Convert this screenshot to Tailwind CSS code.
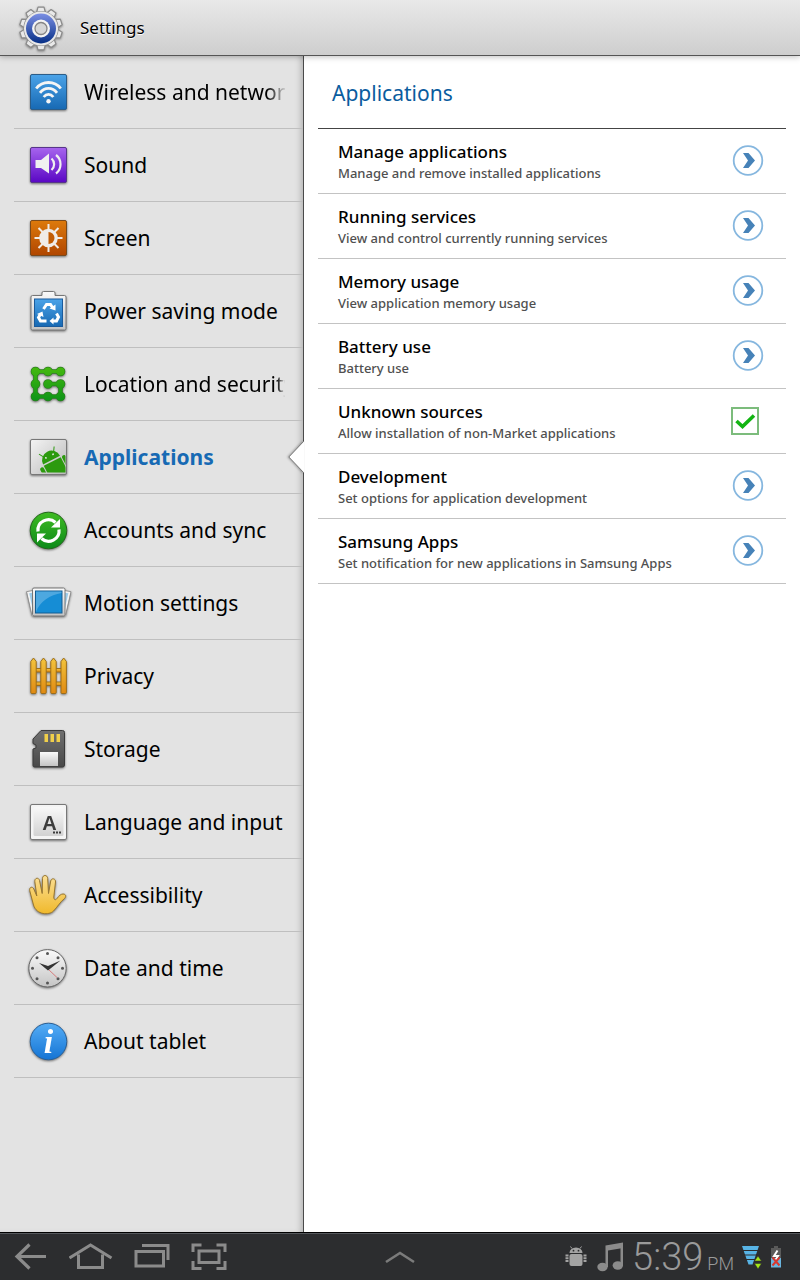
<!DOCTYPE html>
<html lang="en">
<head>
    <meta charset="UTF-8">
    <meta name="viewport" content="width=device-width, initial-scale=1.0">
    <title>Settings</title>
    <script src="https://cdn.jsdelivr.net/npm/@tailwindcss/browser@4"></script>
</head>
<body class="flex min-h-screen flex-col bg-white font-['Noto_Sans','Open_Sans',sans-serif] text-black">
    <!-- shared gradients and symbols -->
    <svg class="absolute size-0" aria-hidden="true">
        <defs>
            <linearGradient id="g-blue" x1="0" y1="0" x2="0" y2="1"><stop offset="0" stop-color="#4ba3e8"/><stop offset="1" stop-color="#1769b3"/></linearGradient>
            <linearGradient id="g-purple" x1="0" y1="0" x2="0" y2="1"><stop offset="0" stop-color="#a765ee"/><stop offset="1" stop-color="#5a07c4"/></linearGradient>
            <linearGradient id="g-orange" x1="0" y1="0" x2="0" y2="1"><stop offset="0" stop-color="#dd7a0c"/><stop offset="1" stop-color="#b04600"/></linearGradient>
            <linearGradient id="g-green" x1="0" y1="0" x2="0" y2="1"><stop offset="0" stop-color="#3fbb22"/><stop offset="1" stop-color="#0c8a1a"/></linearGradient>
            <linearGradient id="g-dots" gradientUnits="userSpaceOnUse" x1="0" y1="5" x2="0" y2="39"><stop offset="0" stop-color="#45b90f"/><stop offset="1" stop-color="#0d9418"/></linearGradient>
            <linearGradient id="g-silver" x1="0" y1="0" x2="0" y2="1"><stop offset="0" stop-color="#fafafa"/><stop offset="1" stop-color="#c4c4c4"/></linearGradient>
            <linearGradient id="g-tile" x1="0" y1="0" x2="1" y2="1"><stop offset="0" stop-color="#f4f4f4"/><stop offset="1" stop-color="#b9b9b9"/></linearGradient>
            <linearGradient id="g-fence" x1="0" y1="0" x2="0" y2="1"><stop offset="0" stop-color="#f3c53e"/><stop offset="1" stop-color="#e08a12"/></linearGradient>
            <linearGradient id="g-card" x1="0" y1="0" x2="0" y2="1"><stop offset="0" stop-color="#707070"/><stop offset="1" stop-color="#484848"/></linearGradient>
            <linearGradient id="g-hand" x1="0" y1="0" x2="0" y2="1"><stop offset="0" stop-color="#fbdf95"/><stop offset="1" stop-color="#f0b92c"/></linearGradient>
            <linearGradient id="g-info" x1="0" y1="0" x2="0" y2="1"><stop offset="0" stop-color="#55adf6"/><stop offset="1" stop-color="#1474d4"/></linearGradient>
            <linearGradient id="g-ring" x1="0" y1="0" x2="0" y2="1"><stop offset="0" stop-color="#7b8fe4"/><stop offset="1" stop-color="#062f86"/></linearGradient>
            <g id="go">
                <circle cx="16" cy="15.500" r="14.300" fill="#fff" stroke="#86b7df" stroke-width="1.800"/>
                <path d="M11 8h5.500l6.500 7.500-6.500 7.500H11l5-7.500z" fill="#4682b8"/>
            </g>
        </defs>
    </svg>

    <header class="relative z-10 flex h-14 shrink-0 items-center gap-4 border-b border-[#555] bg-linear-to-b from-[#e9e9e9] to-[#cecece] pl-[18px] shadow-[0_1px_6px_rgba(0,0,0,0.25)]">
        <svg class="size-[46px] drop-shadow-[0_1px_1px_rgba(0,0,0,0.4)]" viewBox="0 0 46 46" aria-hidden="true">
            <g fill="#e9e9e9" stroke="#8a8a8a" stroke-width="1.200" stroke-linejoin="round">
                <path id="tooth" d="M18.500 8 20 2.200h6L27.500 8z"/>
                <use href="#tooth" transform="rotate(36 23 23.500)"/>
                <use href="#tooth" transform="rotate(72 23 23.500)"/>
                <use href="#tooth" transform="rotate(108 23 23.500)"/>
                <use href="#tooth" transform="rotate(144 23 23.500)"/>
                <use href="#tooth" transform="rotate(180 23 23.500)"/>
                <use href="#tooth" transform="rotate(216 23 23.500)"/>
                <use href="#tooth" transform="rotate(252 23 23.500)"/>
                <use href="#tooth" transform="rotate(288 23 23.500)"/>
                <use href="#tooth" transform="rotate(324 23 23.500)"/>
                <circle cx="23" cy="23.500" r="17"/>
            </g>
            <circle cx="23" cy="23.500" r="17" fill="#e9e9e9"/>
            <circle cx="23" cy="23.500" r="15" fill="url(#g-ring)"/>
            <circle cx="23" cy="23.500" r="9" fill="#f4f4f4"/>
            <circle cx="23" cy="23.500" r="6" fill="#d6d6d6" stroke="#858585" stroke-width="1.300"/>
        </svg>
        <h1 class="text-[17px] leading-6 text-shadow-[0_1px_0_#fff]">Settings</h1>
    </header>

    <div class="flex flex-1">
        <nav class="w-[38%] shrink-0 border-r border-[#4a4a4a] bg-[#e3e3e3] pl-3.5 shadow-[inset_-5px_0_6px_-3px_rgba(0,0,0,0.22)]" aria-label="Settings sections">
            <ul class="text-[21px] leading-7 whitespace-nowrap">
                <li class="border-b border-[#bfbfbf]">
                    <a href="#wireless" class="flex h-[72px] items-center gap-3.5 pl-3">
                        <svg class="size-11 shrink-0 drop-shadow-[0_1px_1px_rgba(0,0,0,0.5)]" viewBox="0 0 44 44">
                            <rect x="4.500" y="4.500" width="36" height="35" rx="1.500" fill="url(#g-blue)" stroke="#2c5d88"/>
                            <g fill="none" stroke="#f5f5f5" stroke-width="2.800">
                                <path d="M10.200 18.500C16.500 10.500 28.500 10.500 34.800 18.500"/>
                                <path d="M14 22.800C18.500 17 26.500 17 31 22.800"/>
                                <path d="M17.700 27C20.500 23.500 24.500 23.500 27.300 27"/>
                            </g>
                            <circle cx="22.500" cy="31.200" r="2.200" fill="#f5f5f5"/>
                        </svg>
                        <span class="mr-4 overflow-hidden mask-r-from-90% mask-r-to-100%">Wireless and networks</span>
                    </a>
                </li>
                <li class="border-b border-[#bfbfbf]">
                    <a href="#sound" class="flex h-[72px] items-center gap-3.5 pl-3">
                        <svg class="size-11 shrink-0 drop-shadow-[0_1px_1px_rgba(0,0,0,0.5)]" viewBox="0 0 44 44">
                            <rect x="4.500" y="4.500" width="36" height="35" rx="1.500" fill="url(#g-purple)" stroke="#57358a"/>
                            <path d="M9.500 17h5.500l8-6.500v20L15 25H9.500z" fill="#f0f0f0"/>
                            <g fill="none" stroke="#f0f0f0" stroke-width="2.200">
                                <path d="M25.500 15.500C29 18.500 29 24 25.500 27"/>
                                <path d="M30 12C36 16.500 36 26 30 30.500"/>
                            </g>
                        </svg>
                        <span>Sound</span>
                    </a>
                </li>
                <li class="border-b border-[#bfbfbf]">
                    <a href="#screen" class="flex h-[72px] items-center gap-3.5 pl-3">
                        <svg class="size-11 shrink-0 drop-shadow-[0_1px_1px_rgba(0,0,0,0.5)]" viewBox="0 0 44 44">
                            <rect x="4.500" y="4.500" width="36" height="35" rx="1.500" fill="url(#g-orange)" stroke="#7a4a1c"/>
                            <path d="M22.500 8v28M8.500 22h28M12.500 12l20 20M32.500 12l-20 20" stroke="#f0ece8" stroke-width="2"/>
                            <circle cx="22.500" cy="22" r="9.300" fill="#f0ece8"/>
                            <path d="M22.500 16a6 6 0 0 1 0 12z" fill="#c25c04"/>
                        </svg>
                        <span>Screen</span>
                    </a>
                </li>
                <li class="border-b border-[#bfbfbf]">
                    <a href="#power" class="flex h-[72px] items-center gap-3.5 pl-3">
                        <svg class="size-11 shrink-0 drop-shadow-[0_1px_1px_rgba(0,0,0,0.5)]" viewBox="0 0 44 44">
                            <path d="M6.500 6.500H16V4q0-1.500 1.500-1.500h10Q29 2.500 29 4v2.500h9.500Q40 6.500 40 8v31.500q0 1.500-1.500 1.500h-32Q5 41 5 39.500V8q0-1.500 1.500-1.500z" fill="url(#g-silver)" stroke="#777"/>
                            <rect x="8.500" y="10" width="28" height="27.500" fill="url(#g-blue)" stroke="#1b5b9c"/>
                            <g fill="none" stroke="#fff" stroke-width="3">
                                <path d="M17.500 20 20.500 15.500h4l2 3"/>
                                <path d="M30.500 24.500l2 3.500-2 4h-3.500"/>
                                <path d="M20.500 32h-6l-2-3.500 2-3.500"/>
                            </g>
                            <g fill="#fff">
                                <path d="M29.500 15.500v6l-6-2z"/>
                                <path d="M27.500 28.500v7L23.500 32z"/>
                                <path d="M11 25l5.500-2.500 1 5.500z"/>
                            </g>
                        </svg>
                        <span>Power saving mode</span>
                    </a>
                </li>
                <li class="border-b border-[#bfbfbf]">
                    <a href="#location" class="flex h-[72px] items-center gap-3.5 pl-3">
                        <svg class="size-11 shrink-0 drop-shadow-[0_1px_1px_rgba(0,0,0,0.5)]" viewBox="0 0 44 44">
                            <g fill="none" stroke-linecap="round" stroke-linejoin="round">
                                <g stroke="#2b7d20">
                                    <path d="M34.500 9.500H9.500V34.500H34.500V22H22" stroke-width="4.600"/>
                                    <path d="M9.500 9.500h.01M22 9.500h.01M34.500 9.500h.01M9.500 22h.01M22 22h.01M34.500 22h.01M9.500 34.500h.01M22 34.500h.01M34.500 34.500h.01" stroke-width="9.600"/>
                                </g>
                                <g stroke="url(#g-dots)">
                                    <path d="M34.500 9.500H9.500V34.500H34.500V22H22" stroke-width="3.200"/>
                                    <path d="M9.500 9.500h.01M22 9.500h.01M34.500 9.500h.01M9.500 22h.01M22 22h.01M34.500 22h.01M9.500 34.500h.01M22 34.500h.01M34.500 34.500h.01" stroke-width="8.200"/>
                                </g>
                            </g>
                        </svg>
                        <span class="mr-4 overflow-hidden mask-r-from-95% mask-r-to-99%">Location and security</span>
                    </a>
                </li>
                <li class="relative border-b border-[#bfbfbf]">
                    <a href="#applications" aria-current="page" class="flex h-[72px] items-center gap-3.5 pl-3 font-bold text-[#176ab4]">
                        <svg class="size-11 shrink-0 drop-shadow-[0_1px_1px_rgba(0,0,0,0.5)]" viewBox="0 0 44 44">
                            <defs><clipPath id="tile-clip"><rect x="5" y="5" width="34.500" height="32.500"/></clipPath></defs>
                            <rect x="4.500" y="4.500" width="36" height="35" rx="1.500" fill="url(#g-tile)" stroke="#777"/>
                            <g clip-path="url(#tile-clip)">
                                <g transform="rotate(-27 26 26)" fill="#2c9a0e">
                                    <path d="M16.500 25a9.500 9.500 0 0 1 19 0z"/>
                                    <path d="M20 18l-2.500-4M32 18l2.500-4" stroke="#2c9a0e"/>
                                    <circle cx="22" cy="20.500" r=".9" fill="#eee"/>
                                    <circle cx="30" cy="20.500" r=".9" fill="#eee"/>
                                    <path d="M16.500 26.500h19v18h-19z"/>
                                    <rect x="11.500" y="27" width="4" height="13" rx="2"/>
                                    <rect x="36.500" y="26" width="4" height="13" rx="2"/>
                                </g>
                            </g>
                        </svg>
                        <span>Applications</span>
                    </a>
                    <svg class="absolute top-5 -right-px h-8 w-4 drop-shadow-[-1px_0_1px_rgba(0,0,0,0.3)]" viewBox="0 0 16 32">
                        <path d="M16 0 .800 16 16 32" fill="#fff" stroke="#777"/>
                    </svg>
                </li>
                <li class="border-b border-[#bfbfbf]">
                    <a href="#accounts" class="flex h-[72px] items-center gap-3.5 pl-3">
                        <svg class="size-11 shrink-0 drop-shadow-[0_1px_1px_rgba(0,0,0,0.5)]" viewBox="0 0 44 44">
                            <circle cx="22.500" cy="22.500" r="18.300" fill="url(#g-green)" stroke="#24661c"/>
                            <g fill="none" stroke="#fff" stroke-width="3.200">
                                <path d="M12 23.500a10.500 10.500 0 0 1 17.500-9"/>
                                <path d="M33 21.500a10.500 10.500 0 0 1-17.500 9"/>
                            </g>
                            <path d="M34 11v8.500h-9z" fill="#fff"/>
                            <path d="M11 34.500V25.500h9z" fill="#fff"/>
                        </svg>
                        <span>Accounts and sync</span>
                    </a>
                </li>
                <li class="border-b border-[#bfbfbf]">
                    <a href="#motion" class="flex h-[72px] items-center gap-3.5 pl-3">
                        <svg class="size-11 shrink-0 overflow-visible drop-shadow-[0_1px_1px_rgba(0,0,0,0.5)]" viewBox="0 0 44 44">
                            <g fill="#9ccbe9" stroke="#f3f3f3" stroke-width="2">
                                <path d="M2 11.500 12 9.500V33l-5 .800z"/>
                                <path d="M43.500 11.500 33 9.500V33l5.500.800z"/>
                            </g>
                            <path d="M.500 10.700 7 9.500M45 10.700l-6.500-1.200M.500 10.700 6 34.500M45 10.700l-5.500 23.800" stroke="#888" stroke-width=".8"/>
                            <rect x="6.500" y="7" width="32.500" height="28" rx="1.500" fill="url(#g-silver)" stroke="#777"/>
                            <rect x="9.500" y="10" width="26.500" height="22" fill="#168dd5" stroke="#125c92"/>
                            <path d="M10 10.500h25.500v1.500C24 14 14 20 10 31z" fill="#7cc0ea" opacity=".55"/>
                        </svg>
                        <span>Motion settings</span>
                    </a>
                </li>
                <li class="border-b border-[#bfbfbf]">
                    <a href="#privacy" class="flex h-[72px] items-center gap-3.5 pl-3">
                        <svg class="size-11 shrink-0 drop-shadow-[0_1px_1px_rgba(0,0,0,0.5)]" viewBox="0 0 44 44">
                            <g fill="url(#g-fence)" stroke="#9a6a14" stroke-width=".9">
                                <rect x="7" y="14.500" width="31" height="3.500"/>
                                <rect x="7" y="28" width="31" height="3.500"/>
                                <path d="M4.800 7.500l2.700-3.500 2.700 3.500V38.500q0 1-1 1H5.800q-1 0-1-1z"/>
                                <path d="M14.800 7.500l2.700-3.500 2.700 3.500V38.500q0 1-1 1h-3.400q-1 0-1-1z"/>
                                <path d="M24.800 7.500l2.700-3.500 2.700 3.500V38.500q0 1-1 1h-3.400q-1 0-1-1z"/>
                                <path d="M35 7.500l2.700-3.500 2.700 3.500V38.500q0 1-1 1H36q-1 0-1-1z"/>
                            </g>
                        </svg>
                        <span>Privacy</span>
                    </a>
                </li>
                <li class="border-b border-[#bfbfbf]">
                    <a href="#storage" class="flex h-[72px] items-center gap-3.5 pl-3">
                        <svg class="size-11 shrink-0 drop-shadow-[0_1px_1px_rgba(0,0,0,0.5)]" viewBox="0 0 44 44">
                            <path d="M15 3.500h21.500q2 0 2 2V38q0 2-2 2h-28q-1.500 0-1.500-1.500V22l3-1v-3l-3-1.500V12z" fill="url(#g-card)" stroke="#3a3a3a"/>
                            <g fill="#f0cf4a"><rect x="18.500" y="7" width="3.500" height="8"/><rect x="24.500" y="7" width="3.500" height="8"/><rect x="30.500" y="7" width="3.500" height="8"/></g>
                            <rect x="14" y="25" width="18" height="14" fill="url(#g-silver)"/>
                        </svg>
                        <span>Storage</span>
                    </a>
                </li>
                <li class="border-b border-[#bfbfbf]">
                    <a href="#language" class="flex h-[72px] items-center gap-3.5 pl-3">
                        <svg class="size-11 shrink-0 drop-shadow-[0_1px_1px_rgba(0,0,0,0.5)]" viewBox="0 0 44 44" aria-hidden="true">
                            <rect x="4.500" y="4.500" width="36" height="35" rx="1.500" fill="#f4f4f4" stroke="#777"/>
                            <rect x="7.500" y="7" width="30" height="29" rx="1.500" fill="url(#g-silver)" opacity=".7"/>
                            <text x="23.500" y="29.500" text-anchor="middle" class="font-['Liberation_Sans',sans-serif] text-[20px] font-bold" fill="#3c3c3c">A</text>
                            <path d="M27 32.500h2M30 32.500h2M33 32.500h2" stroke="#3c3c3c" stroke-width="2"/>
                        </svg>
                        <span>Language and input</span>
                    </a>
                </li>
                <li class="border-b border-[#bfbfbf]">
                    <a href="#accessibility" class="flex h-[72px] items-center gap-3.5 pl-3">
                        <svg class="size-11 shrink-0 drop-shadow-[0_1px_1px_rgba(0,0,0,0.5)]" viewBox="0 0 44 44">
                            <path d="M7.500 32 3.700 17.500C3 14 6.700 13 7.800 16l3 7L8.800 8.500C8.500 4.800 12.700 4 13.500 7.500L16.200 20.500 16.500 5.500c0-4 5-4 5.200 0L22.500 20.500 24.700 8c.8-3.500 5.200-2.500 4.800 1L27.800 24c0 3 1.700 3.500 3.200 1.500 2-2.800 4-4.500 6-4.500 3 0 3.500 2.500 1.500 4.500C34 29 31.500 34 27.500 38c-4.500 4.500-17 4-20-6z" fill="url(#g-hand)" stroke="#98762f"/>
                        </svg>
                        <span>Accessibility</span>
                    </a>
                </li>
                <li class="border-b border-[#bfbfbf]">
                    <a href="#date" class="flex h-[72px] items-center gap-3.5 pl-3">
                        <svg class="size-11 shrink-0 drop-shadow-[0_1px_1px_rgba(0,0,0,0.5)]" viewBox="0 0 44 44">
                            <circle cx="21.500" cy="22.300" r="18.700" fill="url(#g-silver)" stroke="#666"/>
                            <g fill="#555">
                                <circle cx="21.500" cy="7.500" r="1.500"/><circle cx="32" cy="11.800" r="1.500"/><circle cx="36.500" cy="22.300" r="1.500"/><circle cx="32" cy="32.800" r="1.500"/>
                                <circle cx="21.500" cy="37" r="1.500"/><circle cx="11" cy="32.800" r="1.500"/><circle cx="6.500" cy="22.300" r="1.500"/><circle cx="11" cy="11.800" r="1.500"/>
                            </g>
                            <path d="M21.500 22.500 31 31.500" stroke="#d77b7b"/>
                            <path d="M13 17l9 3 12.500-5.500L22 24.500z" fill="#333"/>
                        </svg>
                        <span>Date and time</span>
                    </a>
                </li>
                <li class="border-b border-[#bfbfbf]">
                    <a href="#about" class="flex h-[72px] items-center gap-3.5 pl-3">
                        <svg class="size-11 shrink-0 drop-shadow-[0_1px_1px_rgba(0,0,0,0.5)]" viewBox="0 0 44 44" aria-hidden="true">
                            <circle cx="22.500" cy="22.500" r="18.300" fill="url(#g-info)" stroke="#2a5f95"/>
                            <text x="22.500" y="33.500" text-anchor="middle" class="font-['Liberation_Serif',serif] text-[34px] font-bold italic" fill="#fff">i</text>
                        </svg>
                        <span>About tablet</span>
                    </a>
                </li>
            </ul>
        </nav>

        <main class="min-w-0 flex-1 px-3.5">
            <h2 class="flex h-[73px] items-center border-b border-[#444] px-3.5 pt-0.5 text-[21px] leading-7 text-[#0a5c9e]">Applications</h2>
            <ul>
                <li class="border-b border-[#c3c3c3]">
                    <a href="#manage" class="flex h-16 items-center justify-between pr-[22px] pl-5">
                        <span class="flex flex-col pt-0.5 font-medium"><span class="text-[17px] leading-[22px]">Manage applications</span><span class="text-[13px] leading-5 text-[#505050]">Manage and remove installed applications</span></span>
                        <svg class="size-8 shrink-0" viewBox="0 0 32 32"><use href="#go"/></svg>
                    </a>
                </li>
                <li class="border-b border-[#c3c3c3]">
                    <a href="#running" class="flex h-16 items-center justify-between pr-[22px] pl-5">
                        <span class="flex flex-col pt-0.5 font-medium"><span class="text-[17px] leading-[22px]">Running services</span><span class="text-[13px] leading-5 text-[#505050]">View and control currently running services</span></span>
                        <svg class="size-8 shrink-0" viewBox="0 0 32 32"><use href="#go"/></svg>
                    </a>
                </li>
                <li class="border-b border-[#c3c3c3]">
                    <a href="#memory" class="flex h-16 items-center justify-between pr-[22px] pl-5">
                        <span class="flex flex-col pt-0.5 font-medium"><span class="text-[17px] leading-[22px]">Memory usage</span><span class="text-[13px] leading-5 text-[#505050]">View application memory usage</span></span>
                        <svg class="size-8 shrink-0" viewBox="0 0 32 32"><use href="#go"/></svg>
                    </a>
                </li>
                <li class="border-b border-[#c3c3c3]">
                    <a href="#battery" class="flex h-16 items-center justify-between pr-[22px] pl-5">
                        <span class="flex flex-col pt-0.5 font-medium"><span class="text-[17px] leading-[22px]">Battery use</span><span class="text-[13px] leading-5 text-[#505050]">Battery use</span></span>
                        <svg class="size-8 shrink-0" viewBox="0 0 32 32"><use href="#go"/></svg>
                    </a>
                </li>
                <li class="border-b border-[#c3c3c3]">
                    <label for="unknown-sources" class="flex h-16 items-center justify-between pr-[27px] pl-5">
                        <span class="flex flex-col pt-0.5 font-medium"><span class="text-[17px] leading-[22px]">Unknown sources</span><span class="text-[13px] leading-5 text-[#505050]">Allow installation of non-Market applications</span></span>
                        <span class="relative size-7 shrink-0">
                            <input type="checkbox" id="unknown-sources" checked class="peer block size-7 appearance-none border-2 border-[#7cbc7c] bg-white">
                            <svg class="pointer-events-none absolute inset-0 hidden size-7 peer-checked:block" viewBox="0 0 28 28"><path d="M5.500 14 11.500 19.500 23 8.500" fill="none" stroke="#12b512" stroke-width="3.600"/></svg>
                        </span>
                    </label>
                </li>
                <li class="border-b border-[#c3c3c3]">
                    <a href="#development" class="flex h-16 items-center justify-between pr-[22px] pl-5">
                        <span class="flex flex-col pt-0.5 font-medium"><span class="text-[17px] leading-[22px]">Development</span><span class="text-[13px] leading-5 text-[#505050]">Set options for application development</span></span>
                        <svg class="size-8 shrink-0" viewBox="0 0 32 32"><use href="#go"/></svg>
                    </a>
                </li>
                <li class="border-b border-[#c3c3c3]">
                    <a href="#samsung" class="flex h-16 items-center justify-between pr-[22px] pl-5">
                        <span class="flex flex-col pt-0.5 font-medium"><span class="text-[17px] leading-[22px]">Samsung Apps</span><span class="text-[13px] leading-5 text-[#505050]">Set notification for new applications in Samsung Apps</span></span>
                        <svg class="size-8 shrink-0" viewBox="0 0 32 32"><use href="#go"/></svg>
                    </a>
                </li>
            </ul>
        </main>
    </div>

    <!-- system bar -->
    <footer class="grid h-12 shrink-0 grid-cols-[1fr_auto_1fr] items-center border-t border-black bg-[#2c2d2f] shadow-[inset_0_1px_0_#55585c]">
        <div class="flex items-center gap-[21px] pl-3">
            <button type="button" aria-label="Back">
                <svg class="h-8 w-9" viewBox="0 0 36 32" fill="none" stroke="#8b8b8b" stroke-width="3.200"><path d="M17.500 3.500 5 15.500 17.500 27.500M4.500 15.500H34"/></svg>
            </button>
            <button type="button" aria-label="Home">
                <svg class="h-8 w-11" viewBox="0 0 44 32" fill="none" stroke="#8b8b8b" stroke-width="3"><path d="M.500 17 21.500 4 42.500 17M9.500 13.500V26.500h24V13.500"/></svg>
            </button>
            <button type="button" aria-label="Recent apps">
                <svg class="h-8 w-9" viewBox="0 0 36 32" fill="none" stroke="#8b8b8b" stroke-width="3"><path d="M2 10.500h27.500v14.500H2zM8 4.500h26V19"/></svg>
            </button>
            <button type="button" aria-label="Screenshot">
                <svg class="h-8 w-9" viewBox="0 0 36 32" fill="none" stroke="#8b8b8b" stroke-width="3"><path d="M8 10h20v11.500H8zM2 11V4H10.500M25.500 4H34V11M2 20v7.500H10.500M25.500 27.500H34V20"/></svg>
            </button>
        </div>
        <button type="button" aria-label="Open panel">
            <svg class="h-8 w-8" viewBox="0 0 32 32" fill="none" stroke="#7b7b7b" stroke-width="2.600"><path d="M2 21 16 12 30 21"/></svg>
        </button>
        <div class="flex items-center justify-end gap-2 pr-[18px] font-[Roboto,sans-serif] font-light text-[#9a9a9a]">
            <svg class="h-6 w-6" viewBox="0 0 24 24" fill="#a3a3a3">
                <path d="M5.500 8a6.500 5.500 0 0 1 13 0z"/>
                <path d="M8 3.500 6.500 1.500M16 3.500l1.500-2" stroke="#a3a3a3"/>
                <rect x="5.500" y="9" width="13" height="12" rx="2"/>
                <path d="M3 9.500v8M21 9.500v8" stroke="#a3a3a3" stroke-width="3" stroke-dasharray="2 .7"/>
                <circle cx="9.500" cy="5.700" r=".9" fill="#2c2d2f"/><circle cx="14.500" cy="5.700" r=".9" fill="#2c2d2f"/>
            </svg>
            <svg class="h-8 w-7" viewBox="0 0 28 32" fill="#8b8b8b">
                <path d="M9.500 4.500 27 1.500V7L12 9.500V26H9.500z"/><path d="M24.500 4H27v21h-2.500z"/>
                <ellipse cx="6.500" cy="26" rx="5.200" ry="4.200"/><ellipse cx="21.800" cy="24.500" rx="5.200" ry="4.200"/>
            </svg>
            <p class="flex items-baseline gap-1"><span class="text-[38px] leading-10">5:39</span><span class="text-[18px]">PM</span></p>
            <svg class="h-6 w-5" viewBox="0 0 20 24">
                <path d="M0 1h17L10.500 19.500h-4z" fill="#58b4e6"/>
                <path d="M0 5.500h18M0 10h18M0 14.500h18" stroke="#2c2d2f"/>
                <path d="M12.500 16 16 11l3.500 5zM12.500 18.500h7L16 24z" fill="#a4e619" stroke="#2c2d2f" stroke-width=".5"/>
            </svg>
            <svg class="h-6 w-3" viewBox="0 0 12 24">
                <path d="M4 1h4v2h3v10H1V3h3z" fill="#5a5a5a"/>
                <path d="M1 13h10v9.500H1z" fill="#68b6e0"/>
                <path d="M7.500 5.500 4 11h4l-3 5" stroke="#fff" stroke-width="2" fill="none"/>
                <path d="M2.500 12.500l7 8M9.500 12.500l-7 8" stroke="#d8382f" stroke-width="2"/>
            </svg>
        </div>
    </footer>
</body>
</html>
